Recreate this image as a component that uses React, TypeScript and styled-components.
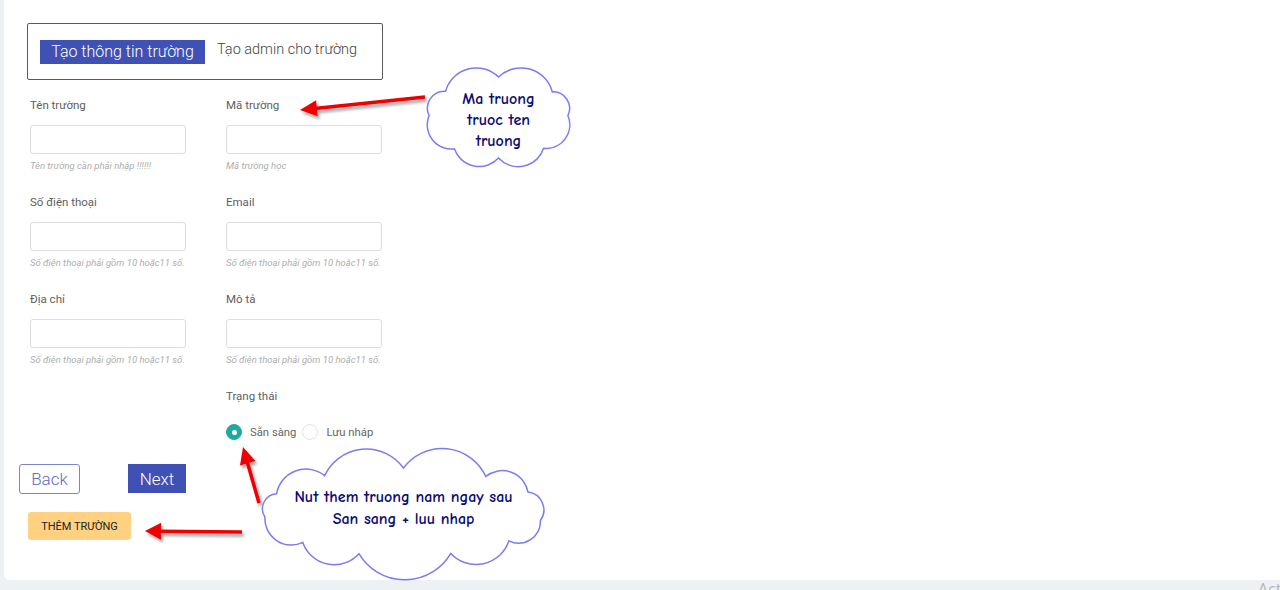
import React from "react";
import styled, { createGlobalStyle } from "styled-components";

const GlobalStyle = createGlobalStyle`
  html, body { margin: 0; padding: 0; }
  body {
    background: #eef1f3;
    font-family: Roboto, "Noto Sans", Arial, sans-serif;
    width: 1280px;
    height: 590px;
    overflow: hidden;
  }
  * { box-sizing: border-box; }
`;

const Page = styled.div`
  position: relative;
  width: 1280px;
  height: 590px;
  padding-left: 4px;
  overflow: hidden;
`;

const Card = styled.div`
  background: #ffffff;
  height: 580px;
  border-radius: 0 0 0 5px;
  padding-top: 23px;
`;

const TabBox = styled.div`
  margin-left: 23px;
  width: 356px;
  height: 57px;
  border: 1px solid #5b5b5b;
  border-radius: 2px;
  display: flex;
  align-items: center;
  padding-left: 12px;
  padding-bottom: 1px;
`;

const Tab = styled.div<{ $active?: boolean }>`
  height: 24px;
  display: flex;
  align-items: center;
  justify-content: center;
  font-weight: 300;
  font-size: ${(p) => (p.$active ? "16px" : "14.5px")};
  color: ${(p) => (p.$active ? "#ffffff" : "#444444")};
  background: ${(p) => (p.$active ? "#3f51b5" : "transparent")};
  width: ${(p) => (p.$active ? "165px" : "auto")};
  margin-left: ${(p) => (p.$active ? "0" : "12px")};
  margin-top: ${(p) => (p.$active ? "1px" : "-3px")};
  white-space: nowrap;
`;

const FormGrid = styled.div`
  margin-left: 26px;
  margin-top: 18px;
  display: grid;
  grid-template-columns: 156px 156px;
  column-gap: 40px;
`;

const Field = styled.div`
  display: flex;
  flex-direction: column;
  height: 97px;
`;

const Label = styled.div`
  font-size: 11.5px;
  line-height: 14px;
  color: #5e5e5e;
  height: 14px;
  white-space: nowrap;
`;

const Input = styled.input`
  margin-top: 13px;
  width: 156px;
  height: 29px;
  border: 1px solid #dedede;
  border-radius: 3px;
  background: #fff;
  outline: none;
`;

const Helper = styled.div`
  margin-top: 6px;
  font-size: 9.5px;
  line-height: 12px;
  font-style: italic;
  color: #adadad;
  white-space: nowrap;
`;

const StatusField = styled.div`
  display: flex;
  flex-direction: column;
  grid-column: 2;
`;

const RadioRow = styled.div`
  margin-top: 21px;
  display: flex;
  align-items: center;
  height: 16px;
  white-space: nowrap;
`;

const RadioOption = styled.label`
  display: flex;
  flex: none;
  align-items: center;
  gap: 8px;
  margin-right: 6px;
  font-size: 11.3px;
  color: #666666;
  white-space: nowrap;
`;

const RadioDot = styled.span<{ $checked?: boolean }>`
  flex: none;
  width: 16px;
  height: 16px;
  border-radius: 50%;
  border: 1px solid ${(p) => (p.$checked ? "#1fa99f" : "#e2e2e2")};
  background: ${(p) => (p.$checked ? "#1fa99f" : "#fff")};
  display: flex;
  align-items: center;
  justify-content: center;
  &::after {
    content: "";
    display: ${(p) => (p.$checked ? "block" : "none")};
    width: 5px;
    height: 5px;
    border-radius: 50%;
    background: #fff;
  }
`;

const NavRow = styled.div`
  margin-top: 24px;
  margin-left: 15px;
  display: flex;
  align-items: flex-start;
  gap: 48px;
`;

const NavButton = styled.button<{ $primary?: boolean }>`
  height: ${(p) => (p.$primary ? "29px" : "30px")};
  width: ${(p) => (p.$primary ? "58px" : "61px")};
  padding: 0;
  font-family: Roboto, sans-serif;
  font-weight: 300;
  font-size: 17px;
  border-radius: ${(p) => (p.$primary ? "0" : "3px")};
  border: 1px solid ${(p) => (p.$primary ? "#3f51b5" : "#7986cb")};
  background: ${(p) => (p.$primary ? "#3f51b5" : "#fff")};
  color: ${(p) => (p.$primary ? "#fff" : "#5c6bc0")};
`;

const AddButton = styled.button`
  margin-top: 18px;
  margin-left: 24px;
  width: 103px;
  height: 28px;
  border: none;
  border-radius: 3px;
  background: #ffd180;
  font-family: Roboto, sans-serif;
  font-size: 11px;
  font-weight: 400;
  color: #222;
  padding: 0;
`;

const Overlay = styled.svg`
  position: absolute;
  left: 0;
  top: 0;
  pointer-events: none;
`;

const CloudBox = styled.div<{ $x: number; $y: number; $w: number; $h: number }>`
  position: absolute;
  left: ${(p) => p.$x}px;
  top: ${(p) => p.$y}px;
  width: ${(p) => p.$w}px;
  height: ${(p) => p.$h}px;
`;

const CloudText = styled.div<{ $lh: number; $pt: number }>`
  position: absolute;
  inset: 0;
  padding-top: ${(p) => p.$pt}px;
  text-align: center;
  font-family: "Comic Sans MS", "Comic Neue", "DejaVu Sans", sans-serif;
  font-size: 16px;
  font-weight: 600;
  line-height: ${(p) => p.$lh}px;
  color: #0b0b70;
  white-space: nowrap;
`;

const Watermark = styled.div`
  position: absolute;
  left: 1258px;
  top: 579px;
  font-family: "Open Sans", sans-serif;
  font-size: 16px;
  line-height: 20px;
  color: #b5b5b5;
  white-space: nowrap;
`;

function cloudPath(
  w: number,
  h: number,
  n: number,
  insetX: number,
  insetY: number,
  jitter: number[]
) {
  const cx = w / 2;
  const cy = h / 2;
  const rx = w / 2 - insetX;
  const ry = h / 2 - insetY;
  const pts: [number, number][] = [];
  for (let i = 0; i < n; i++) {
    const a = -Math.PI / 2 + (2 * Math.PI * i) / n + (jitter[i % jitter.length] || 0);
    pts.push([cx + rx * Math.cos(a), cy + ry * Math.sin(a)]);
  }
  let d = `M ${pts[0][0].toFixed(1)} ${pts[0][1].toFixed(1)}`;
  for (let i = 0; i < n; i++) {
    const p = pts[i];
    const q = pts[(i + 1) % n];
    const c = Math.hypot(q[0] - p[0], q[1] - p[1]);
    const r = c * 0.58;
    d += ` A ${r.toFixed(1)} ${r.toFixed(1)} 0 0 1 ${q[0].toFixed(1)} ${q[1].toFixed(1)}`;
  }
  return d + " Z";
}

type CloudProps = {
  x: number;
  y: number;
  w: number;
  h: number;
  n: number;
  insetX: number;
  insetY: number;
  jitter: number[];
  lines: string[];
  lh: number;
  pt: number;
};

function Cloud({ x, y, w, h, n, insetX, insetY, jitter, lines, lh, pt }: CloudProps) {
  return (
    <CloudBox $x={x} $y={y} $w={w} $h={h}>
      <svg width={w} height={h} style={{ display: "block", overflow: "visible" }}>
        <path
          d={cloudPath(w, h, n, insetX, insetY, jitter)}
          fill="#fff"
          stroke="#7c7cf2"
          strokeWidth={1.5}
        />
      </svg>
      <CloudText $lh={lh} $pt={pt}>
        {lines.map((l) => (
          <div key={l}>{l}</div>
        ))}
      </CloudText>
    </CloudBox>
  );
}

function arrowHead(x1: number, y1: number, x2: number, y2: number, len: number, half: number) {
  const dx = x2 - x1;
  const dy = y2 - y1;
  const L = Math.hypot(dx, dy);
  const ux = dx / L;
  const uy = dy / L;
  const bx = x2 - ux * len;
  const by = y2 - uy * len;
  const px = -uy;
  const py = ux;
  return {
    line: { x1, y1, x2: bx + ux * 2, y2: by + uy * 2 },
    pts: `${x2},${y2} ${(bx + px * half).toFixed(1)},${(by + py * half).toFixed(1)} ${(bx - px * half).toFixed(1)},${(by - py * half).toFixed(1)}`,
  };
}

const arrows = [
  arrowHead(425, 97, 300, 110, 17, 8),
  arrowHead(259, 503, 243, 447, 17, 8),
  arrowHead(242, 532, 145, 531, 16, 8.5),
];

const fields = [
  { label: "Tên trường", help: "Tên trường cần phải nhập !!!!!!" },
  { label: "Mã trường", help: "Mã trường học" },
  { label: "Số điện thoại", help: "Số điện thoại phải gồm 10 hoặc11 số." },
  { label: "Email", help: "Số điện thoại phải gồm 10 hoặc11 số." },
  { label: "Địa chỉ", help: "Số điện thoại phải gồm 10 hoặc11 số." },
  { label: "Mô tả", help: "Số điện thoại phải gồm 10 hoặc11 số." },
];

export default function App() {
  return (
    <>
      <GlobalStyle />
      <Page>
        <Card>
          <TabBox>
            <Tab $active>Tạo thông tin trường</Tab>
            <Tab>Tạo admin cho trường</Tab>
          </TabBox>
          <FormGrid>
            {fields.map((f) => (
              <Field key={f.label}>
                <Label>{f.label}</Label>
                <Input />
                <Helper>{f.help}</Helper>
              </Field>
            ))}
            <StatusField>
              <Label>Trạng thái</Label>
              <RadioRow>
                <RadioOption>
                  <RadioDot $checked />
                  Sẵn sàng
                </RadioOption>
                <RadioOption>
                  <RadioDot />
                  Lưu nháp
                </RadioOption>
              </RadioRow>
            </StatusField>
          </FormGrid>
          <NavRow>
            <NavButton>Back</NavButton>
            <NavButton $primary>Next</NavButton>
          </NavRow>
          <AddButton>THÊM TRƯỜNG</AddButton>
        </Card>
        <Overlay width={1280} height={590}>
          <defs>
            <filter id="sh" x="-20%" y="-50%" width="140%" height="200%">
              <feDropShadow dx="2" dy="3" stdDeviation="1.8" floodColor="#000" floodOpacity="0.35" />
            </filter>
          </defs>
          {arrows.map((a, i) => (
            <g key={i} filter="url(#sh)">
              <line {...a.line} stroke="#ee0000" strokeWidth={3.5} />
              <polygon points={a.pts} fill="#ee0000" />
            </g>
          ))}
        </Overlay>
        <Cloud
          x={420}
          y={65}
          w={157}
          h={105}
          n={8}
          insetX={9}
          insetY={12}
          jitter={[0, 0.1, -0.05, 0.08, 0, -0.1, 0.05, -0.08]}
          lines={["Ma truong", "truoc ten", "truong"]}
          lh={21}
          pt={24}
        />
        <Cloud
          x={255}
          y={447}
          w={297}
          h={130}
          n={11}
          insetX={9}
          insetY={21}
          jitter={[0, 0.06, -0.04, 0.05, 0, -0.06, 0.04, -0.05, 0.03, 0, -0.03]}
          lines={["Nut them truong nam ngay sau", "San sang + luu nhap"]}
          lh={22}
          pt={39}
        />
        <Watermark>Activate Windows</Watermark>
      </Page>
    </>
  );
}
